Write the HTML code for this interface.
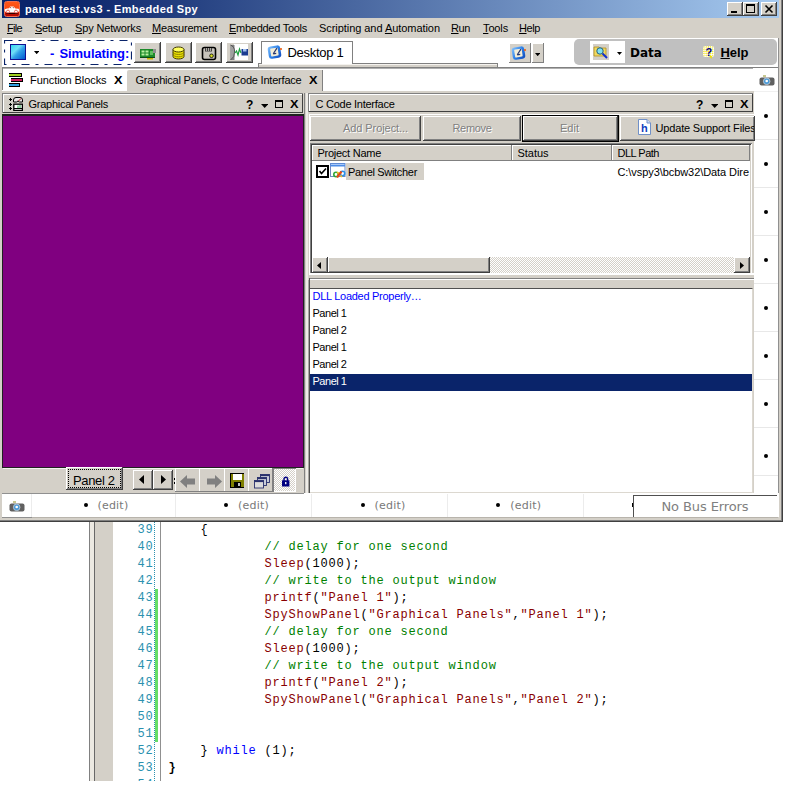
<!DOCTYPE html><html><head><meta charset="utf-8"><title>panel test.vs3 - Embedded Spy</title><style>

html,body{margin:0;padding:0;background:#fff;}
body{width:785px;height:785px;position:relative;overflow:hidden;font-family:"Liberation Sans",sans-serif;}
div,span.t,svg{position:absolute;box-sizing:border-box;}
span.t{white-space:pre;line-height:1;}
u{text-decoration:underline;text-underline-offset:1px;}
.face{background:#D4D0C8;}
.raised{background:#D4D0C8;box-shadow:inset -1px -1px 0 #404040,inset 1px 1px 0 #fff,inset -2px -2px 0 #808080;}
.raised1{background:#D4D0C8;box-shadow:inset -1px -1px 0 #808080,inset 1px 1px 0 #fff;}
.sunken{box-shadow:inset 1px 1px 0 #808080,inset -1px -1px 0 #fff,inset 2px 2px 0 #404040,inset -2px -2px 0 #D4D0C8;}
.dither{background-image:conic-gradient(#fff 25%,#D4D0C8 0 50%,#fff 0 75%,#D4D0C8 0);background-size:2px 2px;}

</style></head><body>
<div class="" style="left:0px;top:0px;width:783px;height:522px;background:#D4D0C8;"></div>
<div class="" style="left:781px;top:0px;width:1px;height:521px;background:#808080;"></div>
<div class="" style="left:782px;top:0px;width:1px;height:522px;background:#404040;"></div>
<div class="" style="left:0px;top:520px;width:782px;height:1px;background:#808080;"></div>
<div class="" style="left:0px;top:521px;width:783px;height:1px;background:#404040;"></div>
<div class="" style="left:2px;top:0px;width:777px;height:18px;background:linear-gradient(90deg,#0A246A 0%,#0A246A 8%,#A6CAF0 100%);"></div>
<div class="" style="left:4px;top:1px;width:16px;height:16px;background:linear-gradient(180deg,#ff5818 0%,#f84810 50%,#d01000 62%,#b80800 100%);border-radius:2.5px;border:1px solid #f07050;"><svg width="16" height="16" viewBox="0 0 16 16" style="left:-1px;top:-1px"><path d="M2.5 12.4 H13.5" stroke="#300000" stroke-width="1.2"/><path d="M.8 8.2 L3 7.6 L5.2 7.2 L6.2 5.4 L9.6 5.4 L11.4 7.4 L14.6 7.8 L15.4 9.6 L14 11.4 L2 11.4 L.8 10 Z" fill="#fff"/><circle cx="4" cy="10.6" r="1.5" fill="#fff" stroke="#e02818" stroke-width=".7"/><circle cx="12" cy="10.6" r="1.5" fill="#fff" stroke="#e02818" stroke-width=".7"/><path d="M6.4 6 L6.9 7.2 M9 6 L9.6 7.2" stroke="#701808" stroke-width=".7"/></svg></div>
<div class="raised" style="left:727px;top:2px;width:16px;height:14px;"><div style="left:4px;top:9px;width:6px;height:2px;background:#000"></div></div>
<div class="raised" style="left:743px;top:2px;width:16px;height:14px;"><div style="left:3px;top:2px;width:9px;height:9px;border:1px solid #000;border-top:2px solid #000"></div></div>
<div class="raised" style="left:761px;top:2px;width:16px;height:14px;"><svg width="16" height="14" style="left:0;top:0"><path d="M4.5 3.5 L11.5 10.5 M11.5 3.5 L4.5 10.5" stroke="#000" stroke-width="1.6"/></svg></div>
<div class="" style="left:2px;top:38px;width:776px;height:29px;background:#fff;"></div>
<svg style="left:4px;top:40px" width="128" height="25"><rect x=".5" y=".5" width="127" height="24" fill="none" stroke="#0A246A" stroke-width="1.2" stroke-dasharray="8 6 3 6"/></svg>
<div class="" style="left:10px;top:44px;width:16px;height:16px;background:linear-gradient(135deg,#30d8f0 0%,#70e0f8 35%,#30a0e8 55%,#0058d0 100%);border:1px solid #101090;"></div>
<svg style="left:34px;top:51px" width="5.4" height="3.2"><polygon points="0,0 5.4,0 2.7,3.2" fill="#000"/></svg>
<div class="raised" style="left:134px;top:42px;width:27px;height:21px;"></div>
<div class="raised" style="left:164.5px;top:42px;width:27px;height:21px;"></div>
<div class="raised" style="left:195px;top:42px;width:27px;height:21px;"></div>
<div class="raised" style="left:225.5px;top:42px;width:27px;height:21px;"></div>
<svg style="left:139px;top:47px" width="18" height="14"><rect x="1" y="2" width="15" height="8" fill="#1c8a2a"/><rect x="14" y="2" width="3" height="4" fill="#909090"/><rect x="2.5" y="3.5" width="3" height="2" fill="#b8f0a0"/><rect x="6.5" y="3.5" width="3" height="2" fill="#b8f0a0"/><rect x="2.5" y="6.5" width="3" height="2" fill="#b8f0a0"/><rect x="6.5" y="6.5" width="3" height="2" fill="#b8f0a0"/><rect x="11" y="4" width="3" height="4" fill="#60c060"/><rect x="8" y="10" width="6" height="2.5" fill="#c8b400"/><rect x="1" y="10" width="15" height="1" fill="#0c4c14"/></svg>
<svg style="left:172px;top:46px" width="13" height="14"><path d="M1 3.5 V10.5 A5.5 2.5 0 0 0 12 10.5 V3.5 Z" fill="#e8e000" stroke="#403800" stroke-width="1"/><ellipse cx="6.5" cy="3.5" rx="5.5" ry="2.5" fill="#ffff60" stroke="#403800" stroke-width="1"/><path d="M1 6 A5.5 2.5 0 0 0 12 6 M1 8.3 A5.5 2.5 0 0 0 12 8.3" fill="none" stroke="#807000" stroke-width=".8"/></svg>
<svg style="left:201px;top:46px" width="16" height="15"><rect x="1.5" y="1.5" width="13" height="12" rx="2" fill="#c8c4bc" stroke="#000" stroke-width="1.6"/><rect x="4" y="2" width="7" height="3.5" fill="#404040"/><path d="M5.5 2 V5 M7.5 2 V5 M9.5 2 V5" stroke="#c8c4bc" stroke-width=".8"/><circle cx="10.5" cy="9.8" r="1.8" fill="#d8e020" stroke="#000" stroke-width=".8"/></svg>
<svg style="left:230px;top:44px" width="19" height="17"><rect x="4" y="0" width="14" height="16" fill="#fff"/><path d="M.5 1 H4.5 V16 H.5 Z" fill="#808080"/><path d="M.5 1 Q5 3 4.5 8 Q5 13 .5 16" fill="#a0a0a0" stroke="#404040" stroke-width=".8"/><path d="M5 9 L6.5 7 L8 11 L9.5 5 L11 9" stroke="#20a040" stroke-width="1.2" fill="none"/><rect x="11.5" y="5" width="6.5" height="6.5" fill="#1c3c90"/><rect x="13" y="5" width="3.5" height="2.5" fill="#a0c0f0"/></svg>
<div class="" style="left:258px;top:63px;width:240px;height:4px;background:#D4D0C8;border-right:1px solid #808080;border-top:1px solid #808080;border-left:1px solid #808080;"></div>
<div class="" style="left:259px;top:64px;width:238px;height:1px;background:#f4f2ee;"></div>
<div class="" style="left:261px;top:41px;width:92px;height:23px;background:#fff;border:1px solid #808080;border-bottom:none;"></div>
<svg style="left:267px;top:44px" width="16" height="16"><defs><linearGradient id="dg267" x1="0" y1="0" x2="1" y2="1"><stop offset="0" stop-color="#8cc8ff"/><stop offset=".5" stop-color="#2c80e8"/><stop offset="1" stop-color="#1048b8"/></linearGradient></defs><g transform="rotate(-9 8 8)"><rect x="1.2" y="1.8" width="12.6" height="12.4" rx="3" fill="url(#dg267)"/><rect x="3.6" y="4" width="7.6" height="8" rx="1" fill="#f4eed8"/><path d="M6 9.5 L10.5 4.5 M6 9.5 H9" stroke="#283870" stroke-width="1.2" fill="none"/></g><circle cx="14" cy="5" r="1.1" fill="#f06010"/></svg>
<div class="raised1" style="left:509px;top:43px;width:22px;height:20px;"></div>
<svg style="left:511px;top:44.5px" width="16" height="16"><defs><linearGradient id="dg511" x1="0" y1="0" x2="1" y2="1"><stop offset="0" stop-color="#8cc8ff"/><stop offset=".5" stop-color="#2c80e8"/><stop offset="1" stop-color="#1048b8"/></linearGradient></defs><g transform="rotate(-9 8 8)"><rect x="1.2" y="1.8" width="12.6" height="12.4" rx="3" fill="url(#dg511)"/><rect x="3.6" y="4" width="7.6" height="8" rx="1" fill="#f4eed8"/><path d="M6 9.5 L10.5 4.5 M6 9.5 H9" stroke="#283870" stroke-width="1.2" fill="none"/></g><circle cx="14" cy="5" r="1.1" fill="#f06010"/></svg>
<div class="raised1" style="left:532px;top:43px;width:12px;height:20px;"></div>
<svg style="left:535px;top:53px" width="5.4" height="3.2"><polygon points="0,0 5.4,0 2.7,3.2" fill="#000"/></svg>
<div class="" style="left:574px;top:39px;width:203px;height:26px;background:#C0C0C0;border-radius:5px;"></div>
<div class="" style="left:590px;top:41px;width:35px;height:22px;background:#fff;"></div>
<div class="" style="left:593px;top:44px;width:16px;height:16px;background:#D4D0C8;"><svg width="16" height="16" style="left:0;top:0"><path d="M1 3 H6 L7 4 H13 V12 H1 Z" fill="#f0d860" stroke="#b09020" stroke-width=".8"/><circle cx="7" cy="7" r="3.2" fill="#80e0f0" stroke="#206080" stroke-width="1"/><path d="M9.5 9.5 L14 14" stroke="#1030d0" stroke-width="2"/></svg></div>
<svg style="left:616.5px;top:51.5px" width="5" height="3"><polygon points="0,0 5,0 2.5,3" fill="#000"/></svg>
<div class="" style="left:703px;top:46px;width:11px;height:11px;background-image:radial-gradient(circle at 1px 1px,#f0e000 0.5px,#fff 0.95px);background-size:2.2px 2.2px;border-radius:2px;"></div>
<svg style="left:709px;top:56px" width="4" height="3"><polygon points="0,0 3,0 2.5,3" fill="#f0e000"/></svg>
<div class="" style="left:2px;top:67px;width:776px;height:1px;background:#808080;"></div>
<div class="" style="left:2px;top:68px;width:776px;height:23px;background:#fff;"></div>
<div class="" style="left:2px;top:68px;width:751px;height:1px;background:#b0b0b0;"></div>
<div class="" style="left:2px;top:68px;width:1px;height:22px;background:#808080;"></div>
<div class="" style="left:127px;top:70px;width:196px;height:21px;background:#D4D0C8;border-right:1px solid #808080;border-top-left-radius:2px;"></div>
<div class="" style="left:9px;top:73px;width:13px;height:4px;background:#a0d020;border:1px solid #000;border-left:none;"></div>
<div class="" style="left:11px;top:78px;width:12px;height:4px;background:#d02060;border:1px solid #000;border-left:none;"></div>
<div class="" style="left:9px;top:83px;width:11px;height:4px;background:#30a0e0;border:1px solid #000;border-left:none;"></div>
<div class="" style="left:759px;top:75px;width:16px;height:11px;"><svg width="16" height="11" style="left:0;top:0"><rect x="4" y="0" width="3" height="2" fill="#c8c890"/><rect x="0.5" y="2.5" width="15" height="8" rx="2" fill="#606060"/><circle cx="7.7" cy="6.3" r="3.3" fill="#4a9ad8" stroke="#c8d0d8" stroke-width=".8"/><circle cx="7.7" cy="6" r="1.3" fill="#fff"/></svg></div>
<div class="" style="left:754px;top:91px;width:24px;height:1px;background:#f0f0f0;"></div>
<div class="" style="left:754px;top:92px;width:24px;height:401px;background:#fff;"></div>
<div class="" style="left:778px;top:38px;width:1px;height:456px;background:#909090;"></div>
<div class="" style="left:754px;top:139px;width:24px;height:1px;background:#e8e8e8;"></div>
<div class="" style="left:754px;top:187px;width:24px;height:1px;background:#e8e8e8;"></div>
<div class="" style="left:754px;top:235px;width:24px;height:1px;background:#e8e8e8;"></div>
<div class="" style="left:754px;top:283px;width:24px;height:1px;background:#e8e8e8;"></div>
<div class="" style="left:754px;top:331px;width:24px;height:1px;background:#e8e8e8;"></div>
<div class="" style="left:754px;top:379px;width:24px;height:1px;background:#e8e8e8;"></div>
<div class="" style="left:754px;top:427px;width:24px;height:1px;background:#e8e8e8;"></div>
<div class="" style="left:754px;top:475px;width:24px;height:1px;background:#e8e8e8;"></div>
<div class="" style="left:764px;top:114px;width:4px;height:4px;background:#000;border-radius:2px;"></div>
<div class="" style="left:764px;top:162px;width:4px;height:4px;background:#000;border-radius:2px;"></div>
<div class="" style="left:764px;top:210px;width:4px;height:4px;background:#000;border-radius:2px;"></div>
<div class="" style="left:764px;top:258px;width:4px;height:4px;background:#000;border-radius:2px;"></div>
<div class="" style="left:764px;top:306px;width:4px;height:4px;background:#000;border-radius:2px;"></div>
<div class="" style="left:764px;top:354px;width:4px;height:4px;background:#000;border-radius:2px;"></div>
<div class="" style="left:764px;top:402px;width:4px;height:4px;background:#000;border-radius:2px;"></div>
<div class="" style="left:764px;top:454px;width:4px;height:4px;background:#000;border-radius:2px;"></div>
<div class="face" style="left:2px;top:93px;width:301px;height:20px;"></div>
<div class="" style="left:2px;top:93px;width:301px;height:20px;box-shadow:inset 1px 1px 0 #808080,inset -1px -1px 0 #404040,inset 2px 2px 0 #fff;"></div>
<div class="" style="left:13px;top:97px;width:10px;height:14px;"><svg width="10" height="14" style="left:0;top:0"><path d="M.5 5 V3 Q.5 .5 3 .5 H7 Q9.5 .5 9.5 3 V5 H6.5 L5 4 L3.5 5 Z" fill="#e8e8e8" stroke="#000"/><path d="M5.5 4 L8 1.5" stroke="#c02020"/><rect x=".8" y="7.2" width="8.6" height="6.2" fill="#fff" stroke="#000" stroke-width="1.3"/><path d="M1 11.5 H9" stroke="#000"/><path d="M5 8.5 V11 M7 8 V11" stroke="#20a040"/></svg></div>
<div class="" style="left:9px;top:99px;width:3px;height:1px;background:#000;"></div>
<div class="" style="left:10px;top:98px;width:1px;height:3px;background:#000;"></div>
<div class="" style="left:9px;top:103.5px;width:3px;height:1px;background:#000;"></div>
<div class="" style="left:10px;top:102.5px;width:1px;height:3px;background:#000;"></div>
<div class="" style="left:9px;top:108px;width:3px;height:1px;background:#000;"></div>
<div class="" style="left:10px;top:107px;width:1px;height:3px;background:#000;"></div>
<svg style="left:261px;top:104px" width="7.4" height="4"><polygon points="0,0 7.4,0 3.7,4" fill="#000"/></svg>
<div class="" style="left:275px;top:100px;width:8px;height:8px;border:1px solid #000;border-top:2px solid #000;"></div>
<div class="" style="left:2px;top:114px;width:302px;height:354px;background:#202020;"></div>
<div class="" style="left:3px;top:116px;width:300px;height:351px;background:#800080;"></div>
<div class="face" style="left:2px;top:468px;width:302px;height:25px;"></div>
<div class="" style="left:3px;top:468px;width:300px;height:1px;background:#f4f2ee;"></div>
<div class="raised" style="left:66px;top:467px;width:57px;height:23px;"></div>
<div class="" style="left:68px;top:469px;width:53px;height:19px;border:1px dotted #000;"></div>
<div class="raised" style="left:133px;top:470px;width:20px;height:20px;"></div>
<div class="raised" style="left:153px;top:470px;width:20px;height:20px;"></div>
<svg style="left:139px;top:475px" width="5" height="9"><polygon points="5,0 5,9 0,4.5" fill="#000"/></svg>
<svg style="left:161px;top:475px" width="5" height="9"><polygon points="0,0 0,9 5,4.5" fill="#000"/></svg>
<div class="" style="left:174px;top:478px;width:1px;height:2px;background:#000;"></div>
<div class="" style="left:174px;top:482px;width:1px;height:2px;background:#000;"></div>
<div class="raised1" style="left:175px;top:468px;width:25px;height:24px;"></div>
<div class="raised1" style="left:199px;top:468px;width:26px;height:24px;"></div>
<div class="raised1" style="left:224px;top:468px;width:25px;height:24px;"></div>
<div class="raised1" style="left:248px;top:468px;width:25px;height:24px;"></div>
<div class="dither" style="left:273px;top:468px;width:23px;height:24px;"></div>
<div class="" style="left:273px;top:468px;width:23px;height:24px;box-shadow:inset 1px 1px 0 #808080,inset -1px -1px 0 #fff;"></div>
<div class="" style="left:180px;top:475px;width:15px;height:13px;"><svg width="15" height="13" style="left:0;top:0"><path d="M0 6.5 L7 0 V3.5 H15 V9.5 H7 V13 Z" fill="#808080"/></svg></div>
<div class="" style="left:206.5px;top:475px;width:15px;height:13px;"><svg width="15" height="13" style="left:0;top:0"><path d="M15 6.5 L8 0 V3.5 H0 V9.5 H8 V13 Z" fill="#808080"/></svg></div>
<div class="" style="left:230px;top:473px;width:14px;height:15px;background:#000;"><div style="left:1px;top:1px;width:13px;height:13px;background:#808000"></div><div style="left:3px;top:1px;width:9px;height:6px;background:#fff"></div><div style="left:4px;top:9px;width:7px;height:5px;background:#000"></div><div style="left:8px;top:10px;width:2px;height:3px;background:#c0c0c0"></div></div>
<svg style="left:254px;top:473px" width="16" height="16"><g stroke="#28306c" stroke-width=".9"><rect x="6.5" y="1.5" width="9" height="8" fill="#c8ccd8"/><path d="M6.5 2.3 H15.5" stroke-width="1.6"/><rect x="3.5" y="4.5" width="9" height="8" fill="#c8ccd8"/><path d="M3.5 5.3 H12.5" stroke-width="1.6"/><rect x=".5" y="7.5" width="9" height="7.5" fill="#dcdcdc"/><path d="M.5 8.3 H9.5" stroke-width="1.6"/></g></svg>
<svg style="left:282px;top:475.5px" width="8" height="11"><path d="M2 5 V3 A1.8 1.8 0 0 1 5.6 3 V5" stroke="#000080" stroke-width="1.4" fill="none"/><rect x="0" y="4.3" width="7.4" height="6.2" fill="#000080"/><rect x="3.1" y="6" width="1.3" height="2.2" fill="#fff"/></svg>
<div class="" style="left:304px;top:93px;width:1px;height:400px;background:#808080;"></div>
<div class="" style="left:306px;top:93px;width:2px;height:400px;background:#EEECE8;"></div>
<div class="face" style="left:308px;top:93px;width:445px;height:19px;"></div>
<div class="" style="left:308px;top:93px;width:445px;height:19px;box-shadow:inset 1px 1px 0 #808080,inset -1px -1px 0 #404040,inset 2px 2px 0 #fff;"></div>
<svg style="left:710.6px;top:104px" width="7.4" height="4"><polygon points="0,0 7.4,0 3.7,4" fill="#000"/></svg>
<div class="" style="left:724.5px;top:100px;width:8.5px;height:8px;border:1px solid #000;border-top:2px solid #000;"></div>
<div class="" style="left:309px;top:114px;width:445px;height:1px;background:#fff;"></div>
<div class="" style="left:309px;top:114px;width:1px;height:160px;background:#fff;"></div>
<div class="raised" style="left:310px;top:116px;width:111px;height:25px;"></div>
<div class="raised" style="left:423px;top:116px;width:98px;height:25px;"></div>
<div class="" style="left:522px;top:115px;width:97px;height:27px;background:#000;"></div>
<div class="raised" style="left:523px;top:116px;width:95px;height:25px;"></div>
<div class="raised" style="left:620px;top:116px;width:135px;height:25px;"></div>
<svg style="left:638px;top:119px" width="13" height="16"><path d="M.5 .5 H9 L12.5 4 V15.5 H.5 Z" fill="#fff" stroke="#7090c8"/><path d="M9 .5 V4 H12.5" fill="#d0e0f8" stroke="#7090c8"/></svg>
<div class="" style="left:310px;top:143px;width:442px;height:132px;background:#fff;"></div>
<div class="sunken" style="left:310px;top:143px;width:442px;height:132px;"></div>
<div class="raised1" style="left:312px;top:145px;width:200px;height:16px;"></div>
<div class="raised1" style="left:512px;top:145px;width:100px;height:16px;"></div>
<div class="raised1" style="left:612px;top:145px;width:138px;height:16px;"></div>
<div class="" style="left:316px;top:165px;width:13px;height:13px;background:#fff;border:2px solid #000;"><svg width="9" height="9" style="left:0;top:0"><path d="M1.5 4 L3.5 6.5 L8 1.5" stroke="#000" stroke-width="1.6" fill="none"/></svg></div>
<svg style="left:330px;top:163px" width="16" height="15"><rect x=".5" y=".5" width="14.5" height="13" fill="#fff" stroke="#7088c0"/><rect x=".5" y=".5" width="14.5" height="3" fill="#4c8ce8"/><rect x="1" y="1" width="13.5" height="1" fill="#a8c8f8"/><circle cx="6" cy="11.5" r="2.2" fill="none" stroke="#30a838" stroke-width="1.6"/><circle cx="12.5" cy="10.5" r="2.2" fill="none" stroke="#2890e8" stroke-width="1.6"/><path d="M7.2 9.2 L9 10.8 M10.5 12.8 L12 13.8" stroke="#f8c020" stroke-width="1.8"/><path d="M7 14.5 L11.5 8.5" stroke="#e84818" stroke-width="2.2"/></svg>
<div class="" style="left:346px;top:163px;width:78px;height:17px;background:#D4D0C8;"></div>
<div class="dither" style="left:312px;top:257px;width:438px;height:16px;"></div>
<div class="raised" style="left:312px;top:257px;width:16px;height:16px;"></div>
<div class="raised" style="left:328px;top:257px;width:162px;height:16px;"></div>
<div class="raised" style="left:734px;top:257px;width:16px;height:16px;"></div>
<svg style="left:317px;top:261.5px" width="4" height="7"><polygon points="4,0 4,7 0,3.5" fill="#000"/></svg>
<svg style="left:740px;top:261.5px" width="4" height="7"><polygon points="0,0 0,7 4,3.5" fill="#000"/></svg>
<div class="" style="left:309px;top:273px;width:445px;height:2px;background:#fff;"></div>
<div class="" style="left:309px;top:278px;width:445px;height:1px;background:#808080;"></div>
<div class="" style="left:310px;top:279px;width:444px;height:1px;background:#fff;"></div>
<div class="" style="left:308px;top:280px;width:1px;height:213px;background:#a8a6a0;"></div>
<div class="" style="left:309px;top:278px;width:1px;height:215px;background:#505050;"></div>
<div class="" style="left:310px;top:288px;width:443px;height:205px;background:#fff;border-top:1px solid #505050;border-right:1px solid #DCD8D0;border-bottom:1px solid #DCD8D0;"></div>
<div class="" style="left:310px;top:374px;width:442px;height:17px;background:#0A246A;"></div>
<div class="" style="left:2px;top:493px;width:777px;height:24px;background:#fff;"></div>
<div class="" style="left:2px;top:493px;width:302px;height:1px;background:#909090;"></div>
<div class="" style="left:2px;top:517px;width:30px;height:1px;background:#909090;"></div>
<div class="" style="left:32px;top:517px;width:746px;height:1px;background:#b8b4ac;"></div>
<div class="" style="left:31px;top:494px;width:1px;height:23px;background:#ececec;"></div>
<div class="" style="left:175px;top:494px;width:1px;height:23px;background:#ececec;"></div>
<div class="" style="left:311px;top:494px;width:1px;height:23px;background:#ececec;"></div>
<div class="" style="left:447px;top:494px;width:1px;height:23px;background:#ececec;"></div>
<div class="" style="left:583px;top:494px;width:1px;height:23px;background:#ececec;"></div>
<div class="" style="left:9px;top:501px;width:16px;height:11px;"><svg width="16" height="11" style="left:0;top:0"><rect x="4" y="0" width="3" height="2" fill="#c8c890"/><rect x="0.5" y="2.5" width="15" height="8" rx="2" fill="#606060"/><circle cx="7.7" cy="6.3" r="3.3" fill="#4a9ad8" stroke="#c8d0d8" stroke-width=".8"/><circle cx="7.7" cy="6" r="1.3" fill="#fff"/></svg></div>
<div class="" style="left:83.6px;top:503px;width:4px;height:4px;background:#000;border-radius:2px;"></div>
<div class="" style="left:224.2px;top:503px;width:4px;height:4px;background:#000;border-radius:2px;"></div>
<div class="" style="left:360.8px;top:503px;width:4px;height:4px;background:#000;border-radius:2px;"></div>
<div class="" style="left:496.4px;top:503px;width:4px;height:4px;background:#000;border-radius:2px;"></div>
<div class="" style="left:633px;top:495px;width:144px;height:22px;background:#fff;border-top:1px solid #505050;border-left:1px solid #505050;"></div>
<div class="" style="left:631.5px;top:503px;width:1.5px;height:4px;background:#000;"></div>
<div class="" style="left:89px;top:522px;width:1px;height:259px;background:#808080;"></div>
<div class="" style="left:90px;top:522px;width:4px;height:259px;background:#ECE9E2;"></div>
<div class="" style="left:94px;top:522px;width:1px;height:259px;background:#686868;"></div>
<div class="" style="left:95px;top:522px;width:18px;height:259px;background:#D4D0C8;"></div>
<div class="" style="left:154px;top:522px;width:1px;height:259px;background-image:linear-gradient(#2B91AF 50%,#fff 0);background-size:1px 2px;"></div>
<div class="" style="left:155px;top:589px;width:3px;height:153px;background:#66DD66;"></div>
<div class="" style="left:160px;top:522px;width:1px;height:259px;background:#909090;"></div>
<span class="t" id="t0" style='left:25px;top:4.00px;font-size:11px;color:#fff;font-family:"Liberation Sans", sans-serif;font-weight:bold;letter-spacing:0.379px;'>panel test.vs3 - Embedded Spy</span>
<span class="t" id="t1" style='left:7px;top:23.00px;font-size:11px;color:#000;font-family:"Liberation Sans", sans-serif;letter-spacing:-0.688px;'><u>F</u>ile</span>
<span class="t" id="t2" style='left:35px;top:23.00px;font-size:11px;color:#000;font-family:"Liberation Sans", sans-serif;letter-spacing:-0.353px;'><u>S</u>etup</span>
<span class="t" id="t3" style='left:75px;top:23.00px;font-size:11px;color:#000;font-family:"Liberation Sans", sans-serif;letter-spacing:-0.156px;'><u>S</u>py Networks</span>
<span class="t" id="t4" style='left:152px;top:23.00px;font-size:11px;color:#000;font-family:"Liberation Sans", sans-serif;letter-spacing:-0.206px;'><u>M</u>easurement</span>
<span class="t" id="t5" style='left:229px;top:23.00px;font-size:11px;color:#000;font-family:"Liberation Sans", sans-serif;letter-spacing:-0.268px;'><u>E</u>mbedded Tools</span>
<span class="t" id="t6" style='left:319px;top:23.00px;font-size:11px;color:#000;font-family:"Liberation Sans", sans-serif;letter-spacing:-0.055px;'>Scripting and <u>A</u>utomation</span>
<span class="t" id="t7" style='left:451px;top:23.00px;font-size:11px;color:#000;font-family:"Liberation Sans", sans-serif;letter-spacing:-0.401px;'><u>R</u>un</span>
<span class="t" id="t8" style='left:483px;top:23.00px;font-size:11px;color:#000;font-family:"Liberation Sans", sans-serif;letter-spacing:-0.138px;'><u>T</u>ools</span>
<span class="t" id="t9" style='left:519px;top:23.00px;font-size:11px;color:#000;font-family:"Liberation Sans", sans-serif;letter-spacing:-0.410px;'><u>H</u>elp</span>
<span class="t" id="t10" style='left:50px;top:47.00px;font-size:13px;color:#0000FF;font-family:"Liberation Sans", sans-serif;font-weight:bold;'>-</span>
<span class="t" id="t11" style='left:59.5px;top:47.00px;font-size:13px;color:#0000FF;font-family:"Liberation Sans", sans-serif;font-weight:bold;letter-spacing:-0.098px;'>Simulating:</span>
<span class="t" id="t12" style='left:287.5px;top:46.00px;font-size:13px;color:#000;font-family:"Liberation Sans", sans-serif;letter-spacing:-0.283px;'>Desktop 1</span>
<span class="t" id="t13" style='left:630px;top:47.00px;font-size:12px;color:#000;font-family:"DejaVu Sans", "Liberation Sans", sans-serif;font-weight:bold;letter-spacing:0.023px;'>Data</span>
<span class="t" id="t14" style='left:705.5px;top:47.00px;font-size:11px;color:#000080;font-family:"Liberation Sans", sans-serif;font-weight:bold;'>?</span>
<span class="t" id="t15" style='left:720.5px;top:46.00px;font-size:13px;color:#000;font-family:"Liberation Sans", sans-serif;font-weight:bold;letter-spacing:-0.047px;'><u>H</u>elp</span>
<span class="t" id="t16" style='left:30px;top:75.00px;font-size:11px;color:#000;font-family:"Liberation Sans", sans-serif;letter-spacing:-0.077px;'>Function Blocks</span>
<span class="t" id="t17" style='left:113.5px;top:75.00px;font-size:11px;color:#000;font-family:"Liberation Sans", sans-serif;font-weight:bold;transform:scaleX(1.16);transform-origin:0 0;'>X</span>
<span class="t" id="t18" style='left:135.5px;top:75.00px;font-size:11px;color:#000;font-family:"Liberation Sans", sans-serif;letter-spacing:-0.207px;'>Graphical Panels, C Code Interface</span>
<span class="t" id="t19" style='left:308.5px;top:75.00px;font-size:11px;color:#000;font-family:"Liberation Sans", sans-serif;font-weight:bold;transform:scaleX(1.16);transform-origin:0 0;'>X</span>
<span class="t" id="t20" style='left:28.5px;top:99.00px;font-size:11px;color:#000;font-family:"Liberation Sans", sans-serif;letter-spacing:-0.268px;'>Graphical Panels</span>
<span class="t" id="t21" style='left:246px;top:99.00px;font-size:12px;color:#000;font-family:"Liberation Sans", sans-serif;font-weight:bold;'>?</span>
<span class="t" id="t22" style='left:290px;top:99.00px;font-size:11px;color:#000;font-family:"Liberation Sans", sans-serif;font-weight:bold;transform:scaleX(1.16);transform-origin:0 0;'>X</span>
<span class="t" id="t23" style='left:73px;top:474.00px;font-size:13px;color:#000;font-family:"Liberation Sans", sans-serif;letter-spacing:-0.371px;'>Panel 2</span>
<span class="t" id="t24" style='left:315.5px;top:99.00px;font-size:11px;color:#000;font-family:"Liberation Sans", sans-serif;letter-spacing:-0.260px;'>C Code Interface</span>
<span class="t" id="t25" style='left:696px;top:99.00px;font-size:12px;color:#000;font-family:"Liberation Sans", sans-serif;font-weight:bold;'>?</span>
<span class="t" id="t26" style='left:740px;top:99.00px;font-size:11px;color:#000;font-family:"Liberation Sans", sans-serif;font-weight:bold;transform:scaleX(1.16);transform-origin:0 0;'>X</span>
<span class="t" id="t27" style='left:344px;top:124.00px;font-size:11px;color:#fff;font-family:"Liberation Sans", sans-serif;letter-spacing:-0.075px;'>Add Project...</span>
<span class="t" id="t28" style='left:343px;top:123.00px;font-size:11px;color:#808080;font-family:"Liberation Sans", sans-serif;letter-spacing:-0.075px;'>Add Project...</span>
<span class="t" id="t29" style='left:453.5px;top:124.00px;font-size:11px;color:#fff;font-family:"Liberation Sans", sans-serif;letter-spacing:-0.328px;'>Remove</span>
<span class="t" id="t30" style='left:452.5px;top:123.00px;font-size:11px;color:#808080;font-family:"Liberation Sans", sans-serif;letter-spacing:-0.328px;'>Remove</span>
<span class="t" id="t31" style='left:561px;top:124.00px;font-size:11px;color:#fff;font-family:"Liberation Sans", sans-serif;letter-spacing:0.008px;'>Edit</span>
<span class="t" id="t32" style='left:560px;top:123.00px;font-size:11px;color:#808080;font-family:"Liberation Sans", sans-serif;letter-spacing:0.008px;'>Edit</span>
<span class="t" id="t33" style='left:641px;top:123.00px;font-size:11px;color:#1040c0;font-family:"Liberation Sans", sans-serif;font-weight:bold;'>h</span>
<span class="t" id="t34" style='left:655.5px;top:123.00px;font-size:11px;color:#000;font-family:"Liberation Sans", sans-serif;letter-spacing:-0.167px;clip-path:inset(0 1.5px 0 0);'>Update Support Files</span>
<span class="t" id="t35" style='left:317.5px;top:147.50px;font-size:11px;color:#000;font-family:"Liberation Sans", sans-serif;letter-spacing:-0.262px;'>Project Name</span>
<span class="t" id="t36" style='left:517.5px;top:147.50px;font-size:11px;color:#000;font-family:"Liberation Sans", sans-serif;letter-spacing:-0.031px;'>Status</span>
<span class="t" id="t37" style='left:617.5px;top:147.50px;font-size:11px;color:#000;font-family:"Liberation Sans", sans-serif;letter-spacing:-0.496px;'>DLL Path</span>
<span class="t" id="t38" style='left:348px;top:167.00px;font-size:11px;color:#000;font-family:"Liberation Sans", sans-serif;letter-spacing:-0.312px;'>Panel Switcher</span>
<span class="t" id="t39" style='left:617.5px;top:167.00px;font-size:11px;color:#000;font-family:"Liberation Sans", sans-serif;letter-spacing:-0.071px;'>C:\vspy3\bcbw32\Data Dire</span>
<span class="t" id="t40" style='left:312.5px;top:291.00px;font-size:11px;color:#0000FF;font-family:"Liberation Sans", sans-serif;letter-spacing:-0.278px;'>DLL Loaded Properly…</span>
<span class="t" id="t41" style='left:312.5px;top:308.00px;font-size:11px;color:#000;font-family:"Liberation Sans", sans-serif;letter-spacing:-0.473px;'>Panel 1</span>
<span class="t" id="t42" style='left:312.5px;top:325.00px;font-size:11px;color:#000;font-family:"Liberation Sans", sans-serif;letter-spacing:-0.473px;'>Panel 2</span>
<span class="t" id="t43" style='left:312.5px;top:342.00px;font-size:11px;color:#000;font-family:"Liberation Sans", sans-serif;letter-spacing:-0.473px;'>Panel 1</span>
<span class="t" id="t44" style='left:312.5px;top:359.00px;font-size:11px;color:#000;font-family:"Liberation Sans", sans-serif;letter-spacing:-0.473px;'>Panel 2</span>
<span class="t" id="t45" style='left:312.5px;top:376.00px;font-size:11px;color:#fff;font-family:"Liberation Sans", sans-serif;letter-spacing:-0.473px;'>Panel 1</span>
<span class="t" id="t46" style='left:97.39999999999999px;top:500.00px;font-size:11px;color:#787878;font-family:"DejaVu Sans", "Liberation Sans", sans-serif;letter-spacing:0.216px;'>(edit)</span>
<span class="t" id="t47" style='left:238.0px;top:500.00px;font-size:11px;color:#787878;font-family:"DejaVu Sans", "Liberation Sans", sans-serif;letter-spacing:0.216px;'>(edit)</span>
<span class="t" id="t48" style='left:374.6px;top:500.00px;font-size:11px;color:#787878;font-family:"DejaVu Sans", "Liberation Sans", sans-serif;letter-spacing:0.216px;'>(edit)</span>
<span class="t" id="t49" style='left:510.2px;top:500.00px;font-size:11px;color:#787878;font-family:"DejaVu Sans", "Liberation Sans", sans-serif;letter-spacing:0.216px;'>(edit)</span>
<span class="t" id="t50" style='left:661.5px;top:500.00px;font-size:13px;color:#808080;font-family:"DejaVu Sans", "Liberation Sans", sans-serif;letter-spacing:-0.103px;'>No Bus Errors</span>
<span class="t" id="t51" style='left:137.4px;top:524.00px;font-size:12px;color:#2B91AF;font-family:"Liberation Mono", monospace;letter-spacing:0.8px;'>39</span>
<span class="t" id="t52" style='left:200.6px;top:524.00px;font-size:12px;color:#000;font-family:"Liberation Mono", monospace;letter-spacing:0.8px;'>{</span>
<span class="t" id="t53" style='left:137.4px;top:541.00px;font-size:12px;color:#2B91AF;font-family:"Liberation Mono", monospace;letter-spacing:0.8px;'>40</span>
<span class="t" id="t54" style='left:264.6px;top:541.00px;font-size:12px;color:#008000;font-family:"Liberation Mono", monospace;letter-spacing:0.8px;'>// delay for one second</span>
<span class="t" id="t55" style='left:137.4px;top:558.00px;font-size:12px;color:#2B91AF;font-family:"Liberation Mono", monospace;letter-spacing:0.8px;'>41</span>
<span class="t" id="t56" style='left:264.6px;top:558.00px;font-size:12px;color:#880000;font-family:"Liberation Mono", monospace;letter-spacing:0.8px;'>Sleep</span>
<span class="t" id="t57" style='left:304.6px;top:558.00px;font-size:12px;color:#000;font-family:"Liberation Mono", monospace;letter-spacing:0.8px;'>(1000);</span>
<span class="t" id="t58" style='left:137.4px;top:575.00px;font-size:12px;color:#2B91AF;font-family:"Liberation Mono", monospace;letter-spacing:0.8px;'>42</span>
<span class="t" id="t59" style='left:264.6px;top:575.00px;font-size:12px;color:#008000;font-family:"Liberation Mono", monospace;letter-spacing:0.8px;'>// write to the output window</span>
<span class="t" id="t60" style='left:137.4px;top:592.00px;font-size:12px;color:#2B91AF;font-family:"Liberation Mono", monospace;letter-spacing:0.8px;'>43</span>
<span class="t" id="t61" style='left:264.6px;top:592.00px;font-size:12px;color:#880000;font-family:"Liberation Mono", monospace;letter-spacing:0.8px;'>printf</span>
<span class="t" id="t62" style='left:312.6px;top:592.00px;font-size:12px;color:#000;font-family:"Liberation Mono", monospace;letter-spacing:0.8px;'>(</span>
<span class="t" id="t63" style='left:320.6px;top:592.00px;font-size:12px;color:#880000;font-family:"Liberation Mono", monospace;letter-spacing:0.8px;'>&quot;Panel 1&quot;</span>
<span class="t" id="t64" style='left:392.6px;top:592.00px;font-size:12px;color:#000;font-family:"Liberation Mono", monospace;letter-spacing:0.8px;'>);</span>
<span class="t" id="t65" style='left:137.4px;top:609.00px;font-size:12px;color:#2B91AF;font-family:"Liberation Mono", monospace;letter-spacing:0.8px;'>44</span>
<span class="t" id="t66" style='left:264.6px;top:609.00px;font-size:12px;color:#880000;font-family:"Liberation Mono", monospace;letter-spacing:0.8px;'>SpyShowPanel</span>
<span class="t" id="t67" style='left:360.6px;top:609.00px;font-size:12px;color:#000;font-family:"Liberation Mono", monospace;letter-spacing:0.8px;'>(</span>
<span class="t" id="t68" style='left:368.6px;top:609.00px;font-size:12px;color:#880000;font-family:"Liberation Mono", monospace;letter-spacing:0.8px;'>&quot;Graphical Panels&quot;</span>
<span class="t" id="t69" style='left:512.6px;top:609.00px;font-size:12px;color:#000;font-family:"Liberation Mono", monospace;letter-spacing:0.8px;'>,</span>
<span class="t" id="t70" style='left:520.6px;top:609.00px;font-size:12px;color:#880000;font-family:"Liberation Mono", monospace;letter-spacing:0.8px;'>&quot;Panel 1&quot;</span>
<span class="t" id="t71" style='left:592.6px;top:609.00px;font-size:12px;color:#000;font-family:"Liberation Mono", monospace;letter-spacing:0.8px;'>);</span>
<span class="t" id="t72" style='left:137.4px;top:626.00px;font-size:12px;color:#2B91AF;font-family:"Liberation Mono", monospace;letter-spacing:0.8px;'>45</span>
<span class="t" id="t73" style='left:264.6px;top:626.00px;font-size:12px;color:#008000;font-family:"Liberation Mono", monospace;letter-spacing:0.8px;'>// delay for one second</span>
<span class="t" id="t74" style='left:137.4px;top:643.00px;font-size:12px;color:#2B91AF;font-family:"Liberation Mono", monospace;letter-spacing:0.8px;'>46</span>
<span class="t" id="t75" style='left:264.6px;top:643.00px;font-size:12px;color:#880000;font-family:"Liberation Mono", monospace;letter-spacing:0.8px;'>Sleep</span>
<span class="t" id="t76" style='left:304.6px;top:643.00px;font-size:12px;color:#000;font-family:"Liberation Mono", monospace;letter-spacing:0.8px;'>(1000);</span>
<span class="t" id="t77" style='left:137.4px;top:660.00px;font-size:12px;color:#2B91AF;font-family:"Liberation Mono", monospace;letter-spacing:0.8px;'>47</span>
<span class="t" id="t78" style='left:264.6px;top:660.00px;font-size:12px;color:#008000;font-family:"Liberation Mono", monospace;letter-spacing:0.8px;'>// write to the output window</span>
<span class="t" id="t79" style='left:137.4px;top:677.00px;font-size:12px;color:#2B91AF;font-family:"Liberation Mono", monospace;letter-spacing:0.8px;'>48</span>
<span class="t" id="t80" style='left:264.6px;top:677.00px;font-size:12px;color:#880000;font-family:"Liberation Mono", monospace;letter-spacing:0.8px;'>printf</span>
<span class="t" id="t81" style='left:312.6px;top:677.00px;font-size:12px;color:#000;font-family:"Liberation Mono", monospace;letter-spacing:0.8px;'>(</span>
<span class="t" id="t82" style='left:320.6px;top:677.00px;font-size:12px;color:#880000;font-family:"Liberation Mono", monospace;letter-spacing:0.8px;'>&quot;Panel 2&quot;</span>
<span class="t" id="t83" style='left:392.6px;top:677.00px;font-size:12px;color:#000;font-family:"Liberation Mono", monospace;letter-spacing:0.8px;'>);</span>
<span class="t" id="t84" style='left:137.4px;top:694.00px;font-size:12px;color:#2B91AF;font-family:"Liberation Mono", monospace;letter-spacing:0.8px;'>49</span>
<span class="t" id="t85" style='left:264.6px;top:694.00px;font-size:12px;color:#880000;font-family:"Liberation Mono", monospace;letter-spacing:0.8px;'>SpyShowPanel</span>
<span class="t" id="t86" style='left:360.6px;top:694.00px;font-size:12px;color:#000;font-family:"Liberation Mono", monospace;letter-spacing:0.8px;'>(</span>
<span class="t" id="t87" style='left:368.6px;top:694.00px;font-size:12px;color:#880000;font-family:"Liberation Mono", monospace;letter-spacing:0.8px;'>&quot;Graphical Panels&quot;</span>
<span class="t" id="t88" style='left:512.6px;top:694.00px;font-size:12px;color:#000;font-family:"Liberation Mono", monospace;letter-spacing:0.8px;'>,</span>
<span class="t" id="t89" style='left:520.6px;top:694.00px;font-size:12px;color:#880000;font-family:"Liberation Mono", monospace;letter-spacing:0.8px;'>&quot;Panel 2&quot;</span>
<span class="t" id="t90" style='left:592.6px;top:694.00px;font-size:12px;color:#000;font-family:"Liberation Mono", monospace;letter-spacing:0.8px;'>);</span>
<span class="t" id="t91" style='left:137.4px;top:711.00px;font-size:12px;color:#2B91AF;font-family:"Liberation Mono", monospace;letter-spacing:0.8px;'>50</span>
<span class="t" id="t92" style='left:137.4px;top:728.00px;font-size:12px;color:#2B91AF;font-family:"Liberation Mono", monospace;letter-spacing:0.8px;'>51</span>
<span class="t" id="t93" style='left:137.4px;top:745.00px;font-size:12px;color:#2B91AF;font-family:"Liberation Mono", monospace;letter-spacing:0.8px;'>52</span>
<span class="t" id="t94" style='left:200.6px;top:745.00px;font-size:12px;color:#000;font-family:"Liberation Mono", monospace;letter-spacing:0.8px;'>}</span>
<span class="t" id="t95" style='left:216.6px;top:745.00px;font-size:12px;color:#0000FF;font-family:"Liberation Mono", monospace;letter-spacing:0.8px;'>while</span>
<span class="t" id="t96" style='left:264.6px;top:745.00px;font-size:12px;color:#000;font-family:"Liberation Mono", monospace;letter-spacing:0.8px;'>(1);</span>
<span class="t" id="t97" style='left:137.4px;top:762.00px;font-size:12px;color:#2B91AF;font-family:"Liberation Mono", monospace;letter-spacing:0.8px;'>53</span>
<span class="t" id="t98" style='left:168.6px;top:762.00px;font-size:12px;color:#000;font-family:"Liberation Mono", monospace;font-weight:bold;letter-spacing:0.8px;'>}</span>
<span class="t" id="t99" style='left:137.4px;top:779.00px;font-size:12px;color:#2B91AF;font-family:"Liberation Mono", monospace;letter-spacing:0.8px;clip-path:inset(0 0 10px 0);'>54</span>

</body></html>
